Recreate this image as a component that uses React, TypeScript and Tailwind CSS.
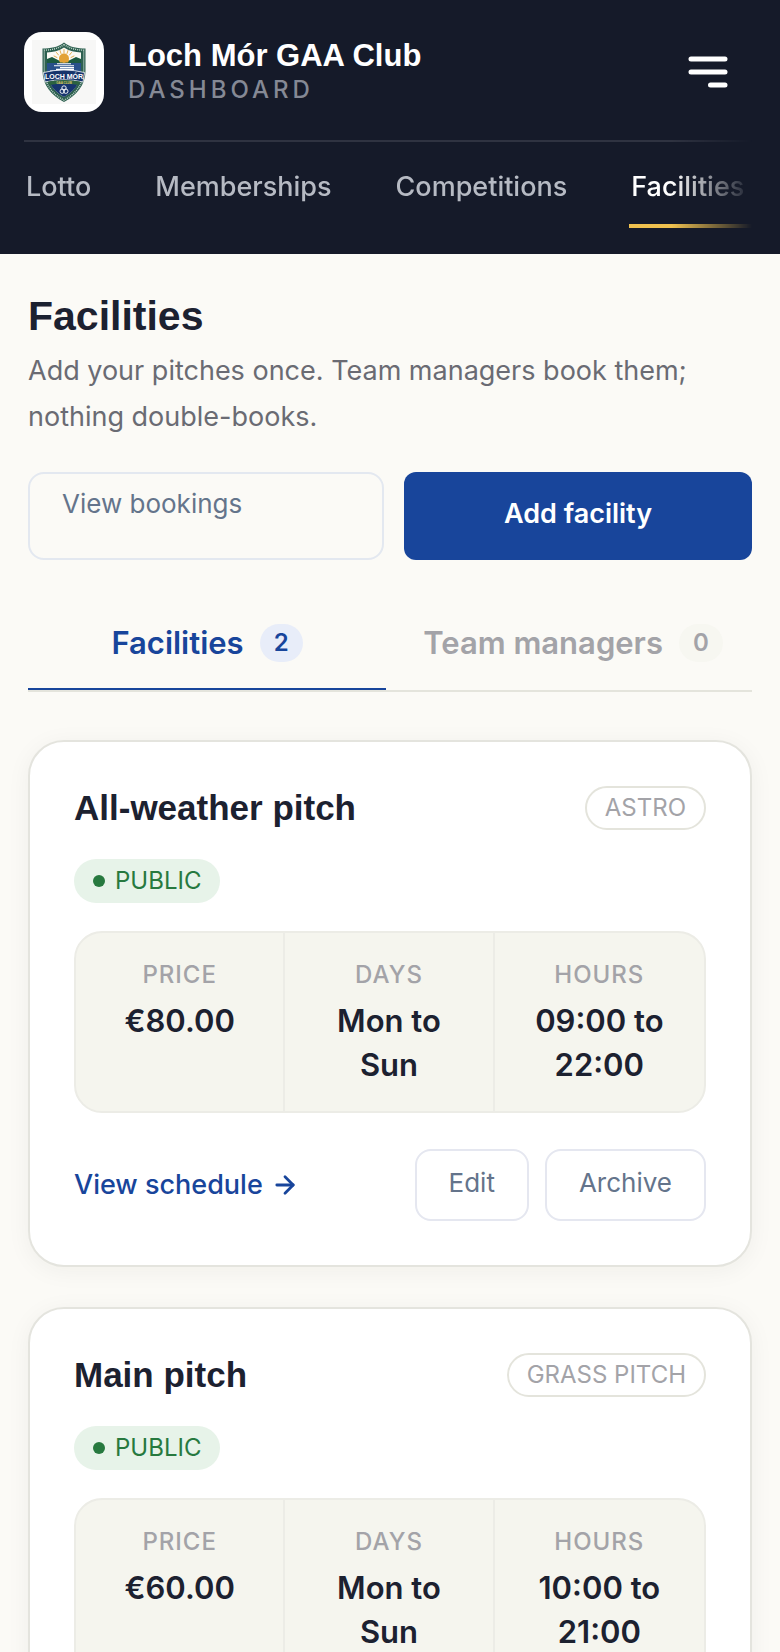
import { ArrowRight } from 'lucide-react';

interface Facility {
  id: string;
  name: string;
  surface: string;
  visibility: string;
  price: string;
  days: string;
  hours: string;
}

const NAV_ITEMS = ['Lotto', 'Memberships', 'Competitions', 'Facilities'];

const FACILITIES: Facility[] = [
  {
    id: 'all-weather',
    name: 'All-weather pitch',
    surface: 'ASTRO',
    visibility: 'PUBLIC',
    price: '€80.00',
    days: 'Mon to Sun',
    hours: '09:00 to 22:00',
  },
  {
    id: 'main',
    name: 'Main pitch',
    surface: 'GRASS PITCH',
    visibility: 'PUBLIC',
    price: '€60.00',
    days: 'Mon to Sun',
    hours: '10:00 to 21:00',
  },
];

function ClubCrest() {
  return (
    <svg viewBox="0 0 64 64" className="h-16 w-16" role="img" aria-label="Loch Mór crest">
      <rect width="64" height="64" fill="#f7f7f6" />
      {/* shield and its braided border */}
      <path
        d="M32 2.5 C27 7 18 8.5 10.5 8.5 L10.5 31 C10.5 45 20 56 32 62 C44 56 53.5 45 53.5 31 L53.5 8.5 C46 8.5 37 7 32 2.5 Z"
        fill="#2d6050"
      />
      <path
        d="M32 4.5 C27 8.5 19 10 12.3 10.2 L12.3 31 C12.3 44 21 54.5 32 60.2 C43 54.5 51.7 44 51.7 31 L51.7 10.2 C45 10 37 8.5 32 4.5 Z"
        fill="none"
        stroke="#c5d8cd"
        strokeWidth="1.4"
        strokeDasharray="1 1"
      />
      <path
        d="M32 7.5 C27 11 21 12 15 12.5 L15 31 C15 42 22 51.5 32 57 C42 51.5 49 42 49 31 L49 12.5 C43 12 37 11 32 7.5 Z"
        fill="#fbfaf5"
      />
      {/* sun */}
      <path
        d="M32 9.5V13M28 10.5l1 3M36 10.5l-1 3M24.5 12.5l2 2.5M39.5 12.5l-2 2.5M22 16l3 1.5M42 16l-3 1.5"
        stroke="#e0a63c"
        strokeWidth="0.9"
        strokeLinecap="round"
      />
      <circle cx="32" cy="18.5" r="5" fill="#e3a234" />
      {/* hills and lake */}
      <path d="M15 19 L20 17 L27 20.5 L32 23 L37 20.5 L44 17 L49 19 L49 24 L15 24 Z" fill="#1c5a40" />
      <path d="M27 20.5 Q32 16.5 37 20.5 L36 22.5 L28 22.5 Z" fill="#e3a234" />
      <rect x="15" y="23" width="34" height="9" fill="#28508a" />
      <path d="M25 23.8h14M22 25.8h20M28 27.6h14M24 29.4h18M18 31h10" stroke="#ffffff" strokeWidth="1.1" />
      <path d="M15.5 35 Q32 31 48.5 35 C48 44 41 52 32 57 C23 52 16 44 15.5 35 Z" fill="#17356e" />
      {/* name ribbon */}
      <path d="M11.5 32.5 Q32 27.5 52.5 32.5 L51 42 Q32 37.5 13 42 Z" fill="#16346b" stroke="#ffffff" strokeWidth="0.8" />
      <text
        x="32"
        y="38.5"
        textAnchor="middle"
        fontFamily="Liberation Sans, sans-serif"
        fontWeight="700"
        fontSize="7"
        fill="#ffffff"
      >
        LOCH MÓR
      </text>
      <path d="M16 41.5 Q32 38.5 48 41.5 L46.5 45 Q32 42.5 17.5 45 Z" fill="#2c6340" />
      <text
        x="32"
        y="43.5"
        textAnchor="middle"
        fontFamily="Liberation Sans, sans-serif"
        fontWeight="700"
        fontSize="3"
        fill="#d8c270"
      >
        GAA CLUB
      </text>
      {/* knot */}
      <g fill="none" stroke="#ffffff" strokeWidth="0.9">
        <circle cx="32" cy="48" r="2.2" />
        <circle cx="30.2" cy="51.2" r="2.2" />
        <circle cx="33.8" cy="51.2" r="2.2" />
      </g>
    </svg>
  );
}

function Header() {
  return (
    <header className="bg-[#151a29] pt-8 pr-7 pb-[26px] pl-6 text-white">
      <div className="flex items-center justify-between pb-7">
        <div className="flex items-center gap-6">
          <div className="flex h-20 w-20 items-center justify-center rounded-[18px] bg-white">
            <ClubCrest />
          </div>
          <div>
            <p className="font-['Liberation_Sans',sans-serif] text-[31px] leading-9 font-bold">Loch Mór GAA Club</p>
            <p className="text-[24px] leading-8 font-medium tracking-[4px] text-[#858995]">DASHBOARD</p>
          </div>
        </div>
        <button type="button" aria-label="Open menu" className="px-6 py-4">
          <svg viewBox="0 0 40 32" className="h-8 w-10" stroke="#ffffff" strokeWidth="5" strokeLinecap="round">
            <path d="M3 3H37M3 16H37M22.5 29H37" />
          </svg>
        </button>
      </div>
      <nav className="flex gap-15 overflow-hidden border-t-2 border-[#2f3341] [mask-image:linear-gradient(to_right,black_calc(100%-80px),transparent)]">
        {NAV_ITEMS.map((item) => (
          <a
            key={item}
            href="#"
            className={`border-b-4 px-0.5 pt-[25px] pb-[17px] text-[27px] leading-10 font-medium ${
              item === 'Facilities' ? 'grow border-[#efc14f] text-white' : 'border-transparent text-[#b6bac3]'
            }`}
          >
            {item}
          </a>
        ))}
      </nav>
    </header>
  );
}

function Stat({ label, value }: { label: string; value: string }) {
  return (
    <div className="flex flex-col gap-2 px-6 pt-[26px] pb-6 text-center">
      <dt className="text-[24px] leading-8 font-medium tracking-[1px] text-[#a3a3a8]">{label}</dt>
      <dd className="text-[31px] leading-11 font-semibold text-[#1c2130]">{value}</dd>
    </div>
  );
}

function FacilityCard({ facility }: { facility: Facility }) {
  return (
    <article className="rounded-[36px] border-2 border-[#e4e4de] bg-white p-11 shadow-[0_4px_24px_rgba(30,30,20,0.05)]">
      <div className="flex items-center justify-between">
        <h2 className="font-['Liberation_Sans',sans-serif] text-[35px] leading-11 font-bold text-[#1c2130]">
          {facility.name}
        </h2>
        <span className="rounded-full border-2 border-[#e4e4dc] px-[18px] text-[24px] leading-10 text-[#a3a3a8]">
          {facility.surface}
        </span>
      </div>

      <div className="mt-[29px] flex">
        <span className="flex items-center gap-[10px] rounded-full bg-[#e7f3e9] px-[19px] text-[24px] leading-11 text-[#27793f]">
          <span className="h-3 w-3 rounded-full bg-[#27793f]" />
          {facility.visibility}
        </span>
      </div>

      <dl className="mt-7 grid grid-cols-3 divide-x-2 divide-[#ecece6] rounded-[28px] border-2 border-[#ecece6] bg-[#f5f5ee]">
        <Stat label="PRICE" value={facility.price} />
        <Stat label="DAYS" value={facility.days} />
        <Stat label="HOURS" value={facility.hours} />
      </dl>

      <div className="mt-9 flex items-center justify-between">
        <a href="#" className="flex items-center gap-2 text-[27px] leading-9 font-medium text-[#18459b]">
          View schedule
          <ArrowRight className="h-7 w-7" strokeWidth={2.4} />
        </a>
        <div className="flex gap-4">
          <button type="button" className="rounded-2xl border-2 border-[#e5e7f0] px-8 pt-3.5 pb-[18px] text-[26px] leading-9 text-[#64748b]">
            Edit
          </button>
          <button type="button" className="rounded-2xl border-2 border-[#e5e7f0] px-8 pt-3.5 pb-[18px] text-[26px] leading-9 text-[#64748b]">
            Archive
          </button>
        </div>
      </div>
    </article>
  );
}

export default function App() {
  return (
    <div className="min-h-screen bg-[#fbfaf6] pb-10 font-['Inter',sans-serif]">
      <Header />
      <main className="px-7 pt-[38px]">
        <h1 className="font-['Liberation_Sans',sans-serif] text-[41px] leading-12 font-bold text-[#1c2130]">Facilities</h1>
        <p className="mt-2 text-[27px] leading-[46px] text-[#6a6b73]">
          Add your pitches once. Team managers book them; nothing double-books.
        </p>

        <div className="mt-8 grid h-22 grid-cols-[89fr_87fr] gap-5">
          <a href="#" className="rounded-2xl border-2 border-[#e3e8f0] px-8 pt-3 text-[26px] leading-9 text-[#64748b]">
            View bookings
          </a>
          <button type="button" className="rounded-xl bg-[#18459b] pb-1 text-[27px] leading-9 font-semibold text-white">
            Add facility
          </button>
        </div>

        <div role="tablist" className="mt-10 grid grid-cols-2 gap-2 border-b-2 border-[#e4e4dc]">
          <button
            type="button"
            role="tab"
            aria-selected="true"
            className="flex items-center justify-center gap-4 border-b-2 border-[#18459b] pt-6 pb-[26px] text-[31px] leading-[38px] font-semibold text-[#18459b]"
          >
            Facilities
            <span className="rounded-full bg-[#e8edf9] px-[14px] text-[24px] leading-[38px]">2</span>
          </button>
          <button
            type="button"
            role="tab"
            aria-selected="false"
            className="flex items-center justify-center gap-4 border-b-2 border-transparent pt-6 pb-[26px] text-[31px] leading-[38px] font-semibold text-[#a3a3a8]"
          >
            Team managers
            <span className="rounded-full bg-[#f7f7f1] px-[14px] text-[24px] leading-[38px]">0</span>
          </button>
        </div>

        <div className="mt-12 flex flex-col gap-10">
          {FACILITIES.map((facility) => (
            <FacilityCard key={facility.id} facility={facility} />
          ))}
        </div>
      </main>
    </div>
  );
}
